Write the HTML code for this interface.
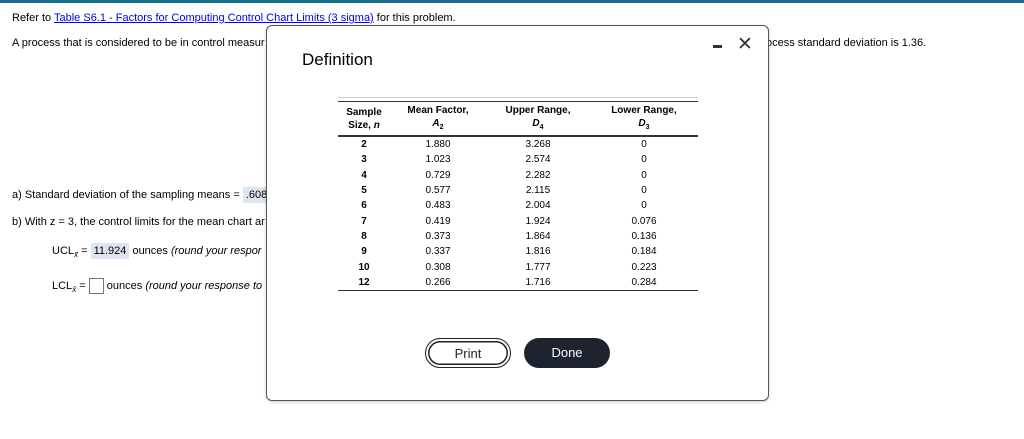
<!DOCTYPE html>
<html><head><style>
body{margin:0;width:1024px;height:439px;background:#fff;font-family:"Liberation Sans",Arial,sans-serif;position:relative;overflow:hidden;color:#000}
.t{position:absolute;font-size:11px;white-space:nowrap}
a{color:#0000ee;text-decoration:underline}
.modal{position:absolute;left:266px;top:25px;width:501px;height:374px;border:1.5px solid #555;border-radius:6px;background:#fff;box-shadow:0 1px 3px rgba(0,0,0,.2)}
table{position:absolute;left:338px;top:101px;width:360px;border-collapse:collapse;font-size:10px;border-top:1px solid #333;border-bottom:1px solid #333}
th{font-weight:bold;text-align:center;line-height:13px;padding:2px 0 1px}
thead tr{border-bottom:2px solid #333}
td{text-align:center;height:15.3px;padding:0;line-height:15px}
td:first-child{font-weight:bold}
.btn{position:absolute;top:338px;height:30px;width:86px;border-radius:16px;font-size:13px;text-align:center;line-height:30px;box-sizing:border-box}
</style></head><body>
<div style="position:absolute;left:0;top:0;width:1024px;height:3px;background:#1b6f8f"></div>
<div class="t" style="left:12px;top:12px">Refer to <a>Table S6.1 - Factors for Computing Control Chart Limits (3 sigma)</a> for this problem.</div>
<div class="t" style="left:12px;top:37px">A process that is considered to be in control measur</div>
<div class="t" style="left:766px;top:37px">ocess standard deviation is 1.36.</div>
<div class="t" style="left:12px;top:189px">a) Standard deviation of the sampling means = <span style="background:#dde6f0;padding:2px 3px">.608</span></div>
<div class="t" style="left:12px;top:216px">b) With z = 3, the control limits for the mean chart ar</div>
<div class="t" style="left:52px;top:245px">UCL<sub style="font-size:8px;font-style:italic">x̄</sub> = <span style="background:#dde6f0;padding:2px 3px">11.924</span> ounces <i>(round your respor</i></div>
<div class="t" style="left:52px;top:278px">LCL<sub style="font-size:8px;font-style:italic">x̄</sub> = <span style="display:inline-block;width:13px;height:14px;border:1px solid #777;vertical-align:middle"></span> ounces <i>(round your response to</i></div>
<div class="modal"></div>
<div class="t" style="left:302px;top:50px;font-size:17px">Definition</div>
<div style="position:absolute;left:713px;top:45px;width:9px;height:3px;background:#333"></div>
<div class="t" style="left:737px;top:33px;font-size:19px;color:#333">✕</div>
<div style="position:absolute;left:338px;top:97px;width:360px;height:1px;background:#ccc"></div>
<table>
<thead><tr><th style="width:52px">Sample<br>Size, <i>n</i></th><th style="width:96px">Mean Factor,<br><i>A</i><sub style="font-size:7px">2</sub></th><th style="width:104px">Upper Range,<br><i>D</i><sub style="font-size:7px">4</sub></th><th>Lower Range,<br><i>D</i><sub style="font-size:7px">3</sub></th></tr></thead>
<tbody>
<tr><td>2</td><td>1.880</td><td>3.268</td><td>0</td></tr>
<tr><td>3</td><td>1.023</td><td>2.574</td><td>0</td></tr>
<tr><td>4</td><td>0.729</td><td>2.282</td><td>0</td></tr>
<tr><td>5</td><td>0.577</td><td>2.115</td><td>0</td></tr>
<tr><td>6</td><td>0.483</td><td>2.004</td><td>0</td></tr>
<tr><td>7</td><td>0.419</td><td>1.924</td><td>0.076</td></tr>
<tr><td>8</td><td>0.373</td><td>1.864</td><td>0.136</td></tr>
<tr><td>9</td><td>0.337</td><td>1.816</td><td>0.184</td></tr>
<tr><td>10</td><td>0.308</td><td>1.777</td><td>0.223</td></tr>
<tr><td>12</td><td>0.266</td><td>1.716</td><td>0.284</td></tr>
</tbody></table>
<div class="btn" style="left:425px;border:1.5px solid #222;box-shadow:inset 0 0 0 2px #fff,inset 0 0 0 3.5px #222;color:#222">Print</div>
<div class="btn" style="left:524px;background:#1e2330;color:#fff">Done</div>
</body></html>
